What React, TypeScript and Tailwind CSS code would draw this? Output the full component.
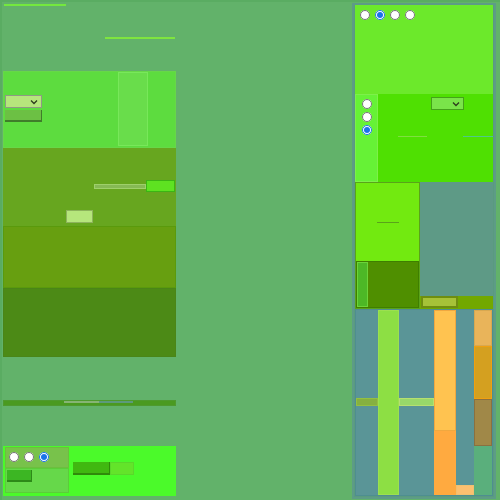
import React from "react";

function Radio({ on }: { on?: boolean }) {
  return (
    <input
      type="radio"
      checked={!!on}
      readOnly
      className="m-0 h-[10px] w-[10px] shrink-0 accent-[#1a73e8]"
    />
  );
}

function Chevron() {
  return (
    <svg width="8" height="6" viewBox="0 0 8 6" className="shrink-0">
      <path d="M1 1.5 L4 4.5 L7 1.5" fill="none" stroke="#2d3b1f" strokeWidth="1.3" />
    </svg>
  );
}

function FakeSelect({ className }: { className: string }) {
  return (
    <div className={`flex items-center justify-end pr-[3px] ${className}`}>
      <Chevron />
    </div>
  );
}

function LeftColumn() {
  return (
    <div className="flex w-[173px] flex-col pt-[2px]">
      <div className="ml-[1px] h-[2px] w-[62px] bg-[#74e83e]" />
      <div className="ml-[102px] mt-[31px] h-[2px] w-[70px] bg-[#7fe53f]" />

      {/* panel 1 */}
      <div className="mt-[32px] flex h-[77px] border border-[#67d848] bg-[#5ddc3f]">
        <div className="flex w-[114px] flex-col gap-[2px] pl-[1px] pt-[23px]">
          <FakeSelect className="h-[13px] w-[37px] border border-[#8f9a84] bg-[#b6e67c]" />
          <div className="h-[12px] w-[37px] border-b-2 border-r border-[#3f7d2a] bg-[#6cc044]" />
        </div>
        <div className="h-[74px] w-[30px] border border-[#78e85a] bg-[#69dd4b]" />
      </div>

      {/* panel 2 */}
      <div className="flex h-[78px] flex-col bg-[#67a61f] px-[1px]">
        <div className="mt-[32px] flex items-center justify-end">
          <div className="h-[5px] w-[52px] border border-[#9fd06b] bg-[#86b955]" />
          <div className="h-[12px] w-[29px] border border-[#3bb514] bg-[#5ee221]" />
        </div>
        <div className="ml-[62px] mt-[18px] h-[13px] w-[27px] border border-[#8db35c] bg-[#b6e67c]" />
      </div>

      {/* panel 3 */}
      <div className="h-[62px] border border-[#5a9a0c] bg-[#679f10]" />
      {/* panel 4 */}
      <div className="h-[69px] border border-[#4a8518] bg-[#4c8a16]" />

      <div className="mt-[43px] flex h-[6px] border border-[#4e9a2e] bg-[#4a9a20]">
        <div className="w-[60px]" />
        <div className="h-[2px] w-[35px] bg-[#86b474]" />
        <div className="h-[2px] w-[34px] bg-[#5c9a7c]" />
      </div>

      {/* bottom panel */}
      <div className="mt-[40px] flex h-[50px] bg-[#4bfa2a] px-[2px] py-[1px]">
        <div className="flex w-[64px] flex-col">
          <div className="flex h-[21px] items-center gap-[5px] border border-[#6cbf3e] bg-[#78c24b] pb-[2px] pl-[3px]">
            <Radio />
            <Radio />
            <Radio on />
          </div>
          <div className="h-[25px] border border-[#5ccc3a] bg-[#66d84a] pl-[1px] pt-[1px]">
            <div className="h-[12px] w-[25px] border-b-2 border-r border-[#2d8a18] bg-[#3cb623]" />
          </div>
        </div>
        <div className="ml-[4px] mt-[15px] flex h-[14px]">
          <div className="h-[13px] w-[37px] border-b-2 border-r border-[#2f8a0a] bg-[#40b810]" />
          <div className="h-[13px] w-[24px] border border-[#5ad82a] bg-[#63e42a]" />
        </div>
      </div>
    </div>
  );
}

function RightColumn() {
  return (
    <div className="mt-[1px] flex h-[496px] w-[144px] flex-col border-2 border-[#5d9c86] bg-[#5a9a80] px-px">
      {/* top panel */}
      <div className="flex h-[89px] items-start gap-[5px] bg-[#6ce92b] pl-[5px] pt-[5px]">
        <Radio />
        <Radio on />
        <Radio />
        <Radio />
      </div>
      {/* second panel */}
      <div className="flex h-[88px] bg-[#4fe002]">
        <div className="flex w-[24px] flex-col items-center gap-[3px] border border-[#7ef04a] bg-[#66f236] pt-[4px]">
          <Radio />
          <Radio />
          <Radio on />
        </div>
        <div className="flex flex-1 flex-col">
          <FakeSelect className="ml-[53px] mt-[3px] h-[13px] w-[33px] border border-[#44a21a] bg-[#7ae44a]" />
          <div className="mt-[26px] flex">
            <div className="ml-[20px] h-[1px] w-[29px] bg-[#7fe040]" />
            <div className="ml-[36px] h-[1px] w-[30px] bg-[#4fc88a]" />
          </div>
        </div>
      </div>
      {/* third section */}
      <div className="flex h-[127px]">
        <div className="flex w-[65px] flex-col border border-[#5aa31a]">
          <div className="flex h-[78px] items-center justify-center bg-[#72ea10]">
            <div className="h-[1px] w-[22px] bg-[#5aa31a]" />
          </div>
          <div className="flex flex-1 border border-[#3f7f00] bg-[#4f8f00]">
            <div className="w-[11px] border border-[#6cd43a] bg-[#4db826]" />
          </div>
        </div>
        <div className="flex flex-1 flex-col">
          <div className="flex-1 bg-[#5e9a86]" />
          <div className="flex h-[13px] bg-[#72a800]">
            <div className="ml-[1px] h-[12px] w-[37px] border-2 border-[#6e8e10] bg-[#a6c238]" />
          </div>
        </div>
      </div>
      {/* fourth section */}
      <div className="mb-px flex flex-1 border border-[#4e8e90] bg-[#5a9597]">
        <div className="flex w-[22px] flex-col pt-[88px]">
          <div className="h-[8px] border border-[#94c040] bg-[#86b040]" />
        </div>
        <div className="w-[22px] border border-[#9ce050] bg-[#8ddf44]" />
        <div className="flex w-[36px] flex-col pt-[88px]">
          <div className="h-[8px] border border-[#b6e070] bg-[#98d86a]" />
        </div>
        <div className="flex w-[22px] flex-col">
          <div className="h-[121px] border border-[#f0a840] bg-[#ffc350]" />
          <div className="flex-1 bg-[#ffaa40]" />
        </div>
        <div className="flex w-[19px] flex-col justify-end">
          <div className="h-[10px] border border-[#f0c070] bg-[#fcc070]" />
        </div>
        <div className="flex w-[18px] flex-col">
          <div className="h-[36px] border border-[#d8a850] bg-[#e9b45a]" />
          <div className="h-[53px] border border-[#f0a010] bg-[#d4a020]" />
          <div className="h-[47px] border border-[#8a7040] bg-[#a08848]" />
          <div className="flex-1 bg-[#5aaf7c]" />
        </div>
      </div>
    </div>
  );
}

export default function App() {
  return (
    <div className="flex h-[500px] w-[500px] border-l-2 border-t-2 border-[#5aac62] bg-[#62b26a] pl-px font-['Liberation_Sans',sans-serif]">
      <LeftColumn />
      <div className="w-[176px]" />
      <RightColumn />
    </div>
  );
}
